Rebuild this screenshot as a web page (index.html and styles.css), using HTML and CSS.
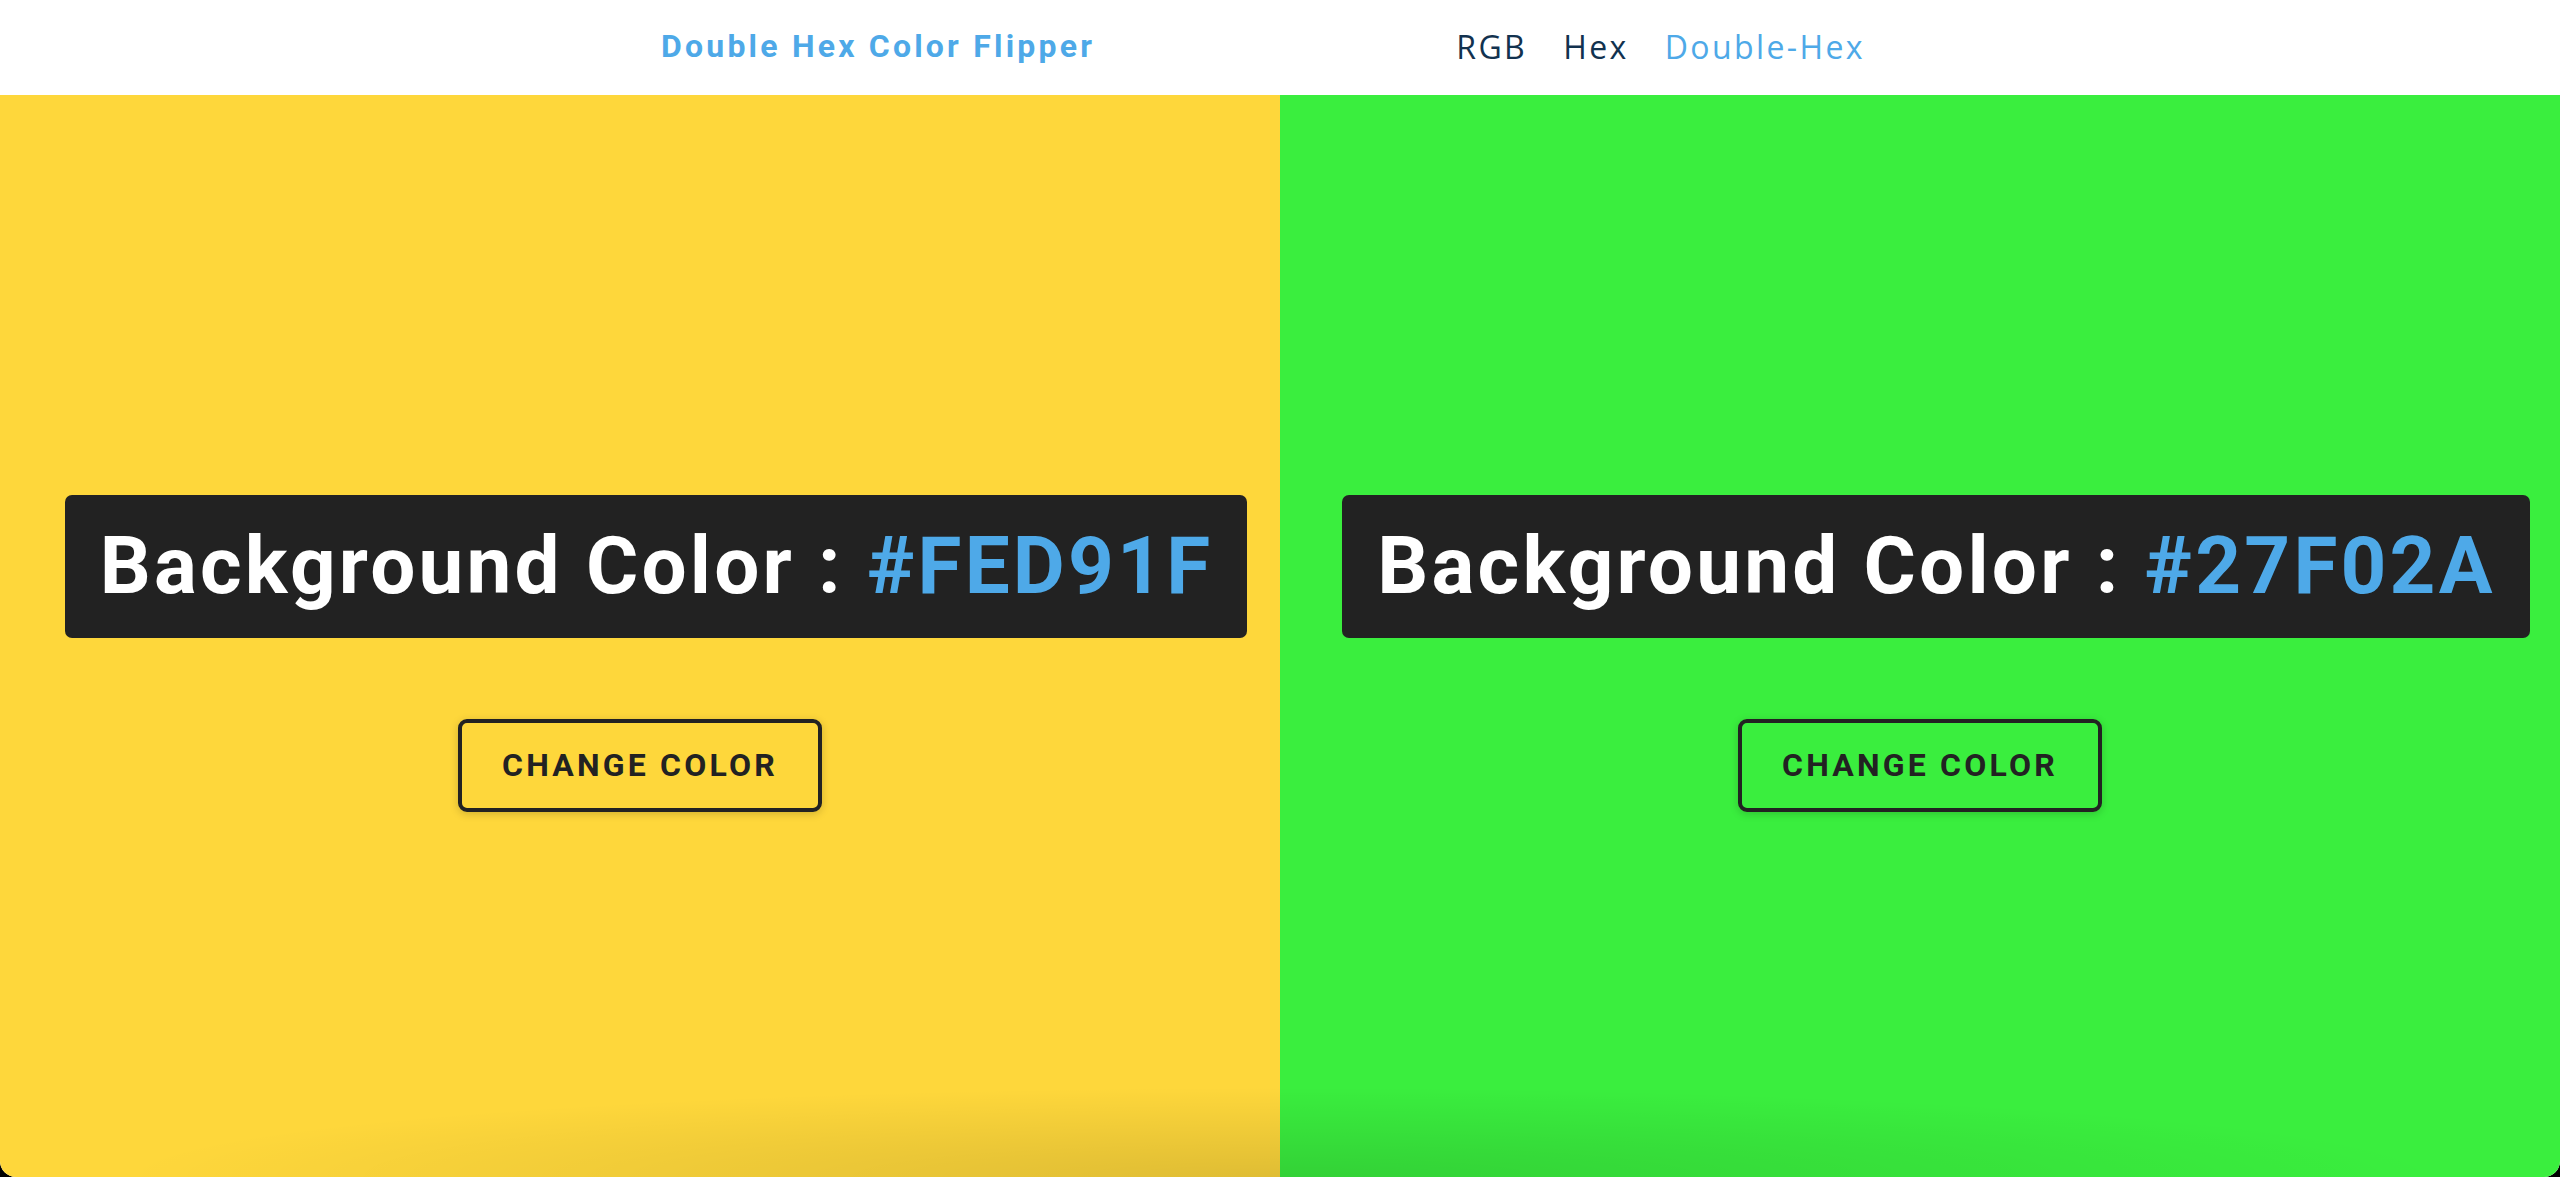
FILE: index.html
```html
<!DOCTYPE html>
<html lang="en">
<head>
<meta charset="utf-8">
<title>Double Hex Color Flipper</title>
<link rel="stylesheet" href="styles.css">
</head>
<body>
<div class="app">
  <nav class="nav">
    <div class="nav-inner">
      <h4 class="brand">Double Hex Color Flipper</h4>
      <ul class="links">
        <li><a class="link" href="#">RGB</a></li>
        <li><a class="link" href="#">Hex</a></li>
        <li><a class="link active" href="#">Double-Hex</a></li>
      </ul>
    </div>
  </nav>
  <main class="panels">
    <section class="panel panel-yellow">
      <h2 class="color-label">Background Color : <span class="hex">#FED91F</span></h2>
      <button class="btn">CHANGE COLOR</button>
    </section>
    <section class="panel panel-green">
      <h2 class="color-label">Background Color : <span class="hex">#27F02A</span></h2>
      <button class="btn">CHANGE COLOR</button>
    </section>
    <div class="bottom-shade"></div>
  </main>
</div>
</body>
</html>
```

FILE: styles.css
```css
* { box-sizing: border-box; }
html, body {
  margin: 0;
  padding: 0;
  height: 100%;
  background: #000;
}
body {
  font-family: Roboto, "Liberation Sans", Arial, sans-serif;
}
.app {
  height: 100vh;
  display: flex;
  flex-direction: column;
  border-radius: 0 0 16px 16px;
  overflow: hidden;
  background: #fff;
}
.nav {
  height: 95px;
  flex: 0 0 95px;
  background: #fff;
  display: flex;
  justify-content: center;
  align-items: center;
  padding-right: 34px;
  padding-bottom: 3px;
}
.nav-inner {
  width: 1204px;
  display: flex;
  justify-content: space-between;
  align-items: center;
}
.brand {
  margin: 0;
  font-family: Roboto, "Liberation Sans", sans-serif;
  font-weight: 700;
  font-size: 32px;
  letter-spacing: 3.2px;
  color: #4ea9e8;
}
.links {
  list-style: none;
  margin: 0;
  padding: 0;
  display: flex;
  gap: 36px;
}
.link {
  font-family: "Open Sans", "DejaVu Sans", sans-serif;
  font-size: 32px;
  letter-spacing: 2.4px;
  color: #12324f;
  text-decoration: none;
}
.link.active { color: #4ea9e8; }
.panels {
  flex: 1;
  display: flex;
  position: relative;
}
.panel {
  flex: 1 1 50%;
  display: flex;
  flex-direction: column;
  justify-content: center;
  align-items: center;
  padding-top: 34px;
}
.panel-yellow { background: #fed73b; }
.panel-green { background: #3aee3e; }
.color-label {
  margin: 0 0 0 32px;
  height: 143px;
  line-height: 143px;
  padding: 0 34px 0 35px;
  background: #222;
  border-radius: 7px;
  color: #fff;
  font-family: Roboto, "Liberation Sans", sans-serif;
  font-weight: 700;
  font-size: 80px;
  letter-spacing: 3.2px;
  white-space: nowrap;
}
.hex { color: #4ea9e8; }
.btn {
  margin-top: 81px;
  height: 93px;
  padding: 0 40px;
  background: transparent;
  border: 4px solid #222;
  border-radius: 9px;
  color: #222;
  font-family: Roboto, "Liberation Sans", sans-serif;
  font-weight: 700;
  font-size: 32px;
  line-height: 85px;
  letter-spacing: 3.2px;
  box-shadow: 0 2px 8px rgba(0, 0, 0, 0.18);
  cursor: pointer;
}
.bottom-shade {
  position: absolute;
  left: 120px;
  right: 120px;
  bottom: 0;
  height: 90px;
  pointer-events: none;
  background: radial-gradient(ellipse 50% 100% at 50% 100%, rgba(0, 0, 0, 0.12), rgba(0, 0, 0, 0) 100%);
}
```
